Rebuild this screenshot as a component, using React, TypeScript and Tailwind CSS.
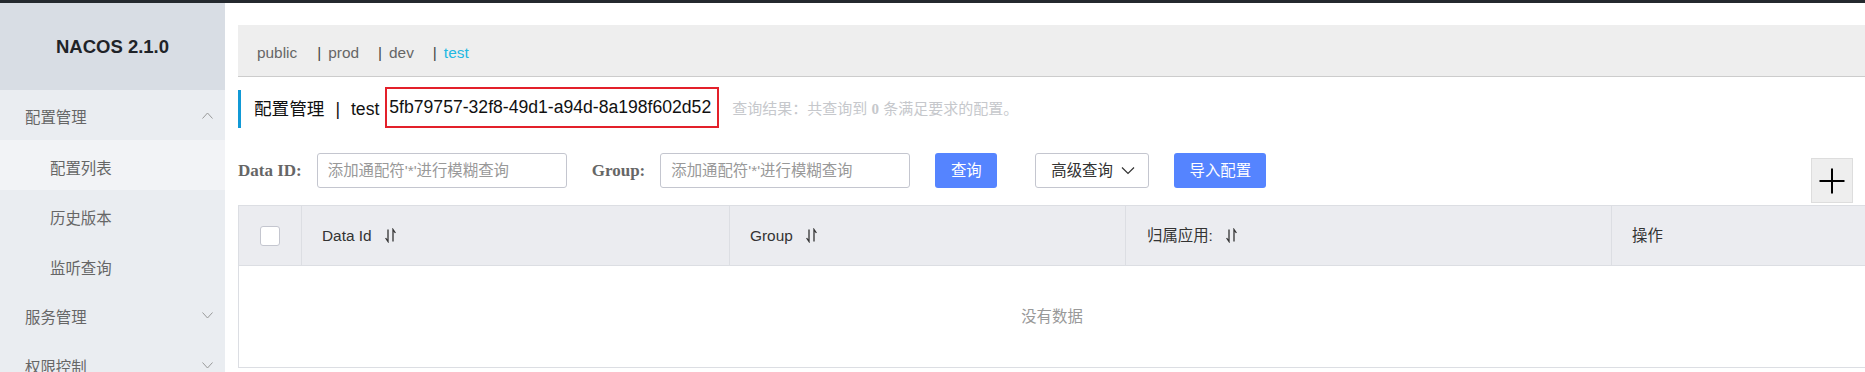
import React from "react";

const SortIcon = () => (
  <svg width="13" height="15" viewBox="0 0 13 15" fill="none" stroke="#333" strokeWidth="1.3" className="ml-[12px] shrink-0">
    <path d="M4 1.5V13.5L1.6 10" />
    <path d="M9 13.5V1.5L11.4 5" />
  </svg>
);

const Chevron = ({ up }: { up?: boolean }) => (
  <svg width="11" height="7" viewBox="0 0 11 7" fill="none" stroke="#999" strokeWidth="1">
    {up ? <path d="M0.5 6.5L5.5 1L10.5 6.5" /> : <path d="M0.5 0.5L5.5 6L10.5 0.5" />}
  </svg>
);

const Sidebar = () => (
  <aside className="w-[225px] shrink-0 bg-[#eaedf1] flex flex-col text-[15.4px] text-[#666]">
    <div className="h-[87px] shrink-0 bg-[#d8dde4] flex items-center justify-center text-[18.5px] font-bold text-[#1f2328]">
      NACOS 2.1.0
    </div>
    <div className="h-[50px] shrink-0 flex items-center justify-between pl-[25px] pr-[12px]">
      <span className="mt-[6px]">配置管理</span>
      <Chevron up />
    </div>
    <div className="h-[50px] shrink-0 flex items-center pl-[50px] bg-[#f2f3f6]">
      <span className="mt-[7px]">配置列表</span>
    </div>
    <div className="h-[50px] shrink-0 flex items-center pl-[50px]">
      <span className="mt-[7px]">历史版本</span>
    </div>
    <div className="h-[50px] shrink-0 flex items-center pl-[50px]">
      <span className="mt-[7px]">监听查询</span>
    </div>
    <div className="h-[50px] shrink-0 flex items-center justify-between pl-[25px] pr-[12px]">
      <span className="mt-[6px]">服务管理</span>
      <Chevron />
    </div>
    <div className="h-[50px] shrink-0 flex items-center justify-between pl-[25px] pr-[12px]">
      <span className="mt-[6px]">权限控制</span>
      <Chevron />
    </div>
  </aside>
);

const NamespaceBar = () => (
  <div className="h-[52px] shrink-0 bg-[#eeeeee] border-b border-[#cccccc] flex items-center pl-[19px] pt-[4px] text-[15.4px] text-[#666]">
    <span>public</span>
    <span className="ml-[20px] text-[#444]">|</span>
    <span className="ml-[7px]">prod</span>
    <span className="ml-[19px] text-[#444]">|</span>
    <span className="ml-[7px]">dev</span>
    <span className="ml-[19px] text-[#444]">|</span>
    <span className="ml-[7px] text-[#22b8e2]">test</span>
  </div>
);

const TitleRow = () => (
  <div className="mt-[13px] h-[38px] shrink-0 flex items-center border-l-[3px] border-[#1199d6] pl-[13px] text-[17.6px] text-[#111]">
    <span>配置管理</span>
    <span className="ml-[11px]">|</span>
    <span className="ml-[11px]">test</span>
    <span className="ml-[6px] self-end h-[41px] w-[334px] border-2 border-[#e3202a] flex items-center pl-[2px]">
      5fb79757-32f8-49d1-a94d-8a198f602d52
    </span>
    <span className="ml-[13px] text-[15px] text-[#c6c8cc]">
      查询结果：共查询到 <b className="font-['Liberation_Serif'] font-bold">0</b> 条满足要求的配置。
    </span>
  </div>
);

const SearchRow = () => (
  <div className="mt-[25px] flex items-start shrink-0">
    <div className="h-[35px] flex items-center">
      <span className="font-['Liberation_Serif'] font-bold text-[17px] text-[#666]">Data ID:</span>
      <input
        readOnly
        placeholder="添加通配符'*'进行模糊查询"
        className="ml-[15px] w-[250px] h-[35px] border border-[#c4c6cf] rounded-[3px] pl-[10px] text-[15.4px] outline-none placeholder:text-[#999]"
      />
      <span className="ml-[25px] font-['Liberation_Serif'] font-bold text-[17px] text-[#666]">Group:</span>
      <input
        readOnly
        placeholder="添加通配符'*'进行模糊查询"
        className="ml-[15px] w-[250px] h-[35px] border border-[#c4c6cf] rounded-[3px] pl-[10px] text-[15.4px] outline-none placeholder:text-[#999]"
      />
      <button className="ml-[25px] w-[62px] h-[35px] rounded-[3px] bg-[#5584ff] text-white text-[15.4px] flex items-center justify-center">
        查询
      </button>
      <button className="ml-[38px] w-[114px] h-[35px] rounded-[3px] bg-white border border-[#c4c6cf] text-[#333] text-[15.4px] flex items-center pl-[15px]">
        高级查询
        <svg width="14" height="9" viewBox="0 0 14 9" fill="none" stroke="#333" strokeWidth="1.2" className="ml-[8px]">
          <path d="M1 1.5L7 7.5L13 1.5" />
        </svg>
      </button>
      <button className="ml-[25px] w-[92px] h-[35px] rounded-[3px] bg-[#5584ff] text-white text-[15.4px] flex items-center justify-center">
        导入配置
      </button>
    </div>
    <button className="ml-auto mr-[12px] mt-[5px] w-[42px] h-[45px] bg-[#eeeeee] border border-[#dddddd] flex items-center justify-center">
      <svg width="26" height="26" viewBox="0 0 26 26" fill="none" stroke="#000" strokeWidth="2">
        <path d="M13 0.5V25.5M0.5 13H25.5" />
      </svg>
    </button>
  </div>
);

const Table = () => (
  <div className="mt-[2px] border-t border-b border-l border-[#dcdee3] text-[15.4px] text-[#333]">
    <div className="h-[60px] bg-[#ebecf0] border-b border-[#dcdee3] flex">
      <div className="w-[63px] shrink-0 border-r border-[#dcdee3] flex items-center justify-center">
        <span className="w-[20px] h-[20px] rounded-[3px] border border-[#c4c6cf] bg-white" />
      </div>
      <div className="w-[428px] shrink-0 border-r border-[#dcdee3] flex items-center pl-[20px]">
        Data Id <SortIcon />
      </div>
      <div className="w-[396px] shrink-0 border-r border-[#dcdee3] flex items-center pl-[20px]">
        Group <SortIcon />
      </div>
      <div className="w-[486px] shrink-0 border-r border-[#dcdee3] flex items-center pl-[21px]">
        归属应用: <SortIcon />
      </div>
      <div className="flex-1 flex items-center pl-[20px]">操作</div>
    </div>
    <div className="h-[101px] flex items-center justify-center text-[#999]">没有数据</div>
  </div>
);

export default function App() {
  return (
    <div className="h-[372px] w-[1865px] overflow-hidden flex flex-col bg-white font-['Liberation_Sans','Noto_Sans_CJK_SC',sans-serif]">
      <div className="h-[3px] shrink-0 bg-[#24292e]" />
      <div className="flex flex-1 min-h-0">
        <Sidebar />
        <main className="flex-1 min-w-0 pl-[13px] pt-[22px] flex flex-col">
          <NamespaceBar />
          <TitleRow />
          <SearchRow />
          <Table />
        </main>
      </div>
    </div>
  );
}
